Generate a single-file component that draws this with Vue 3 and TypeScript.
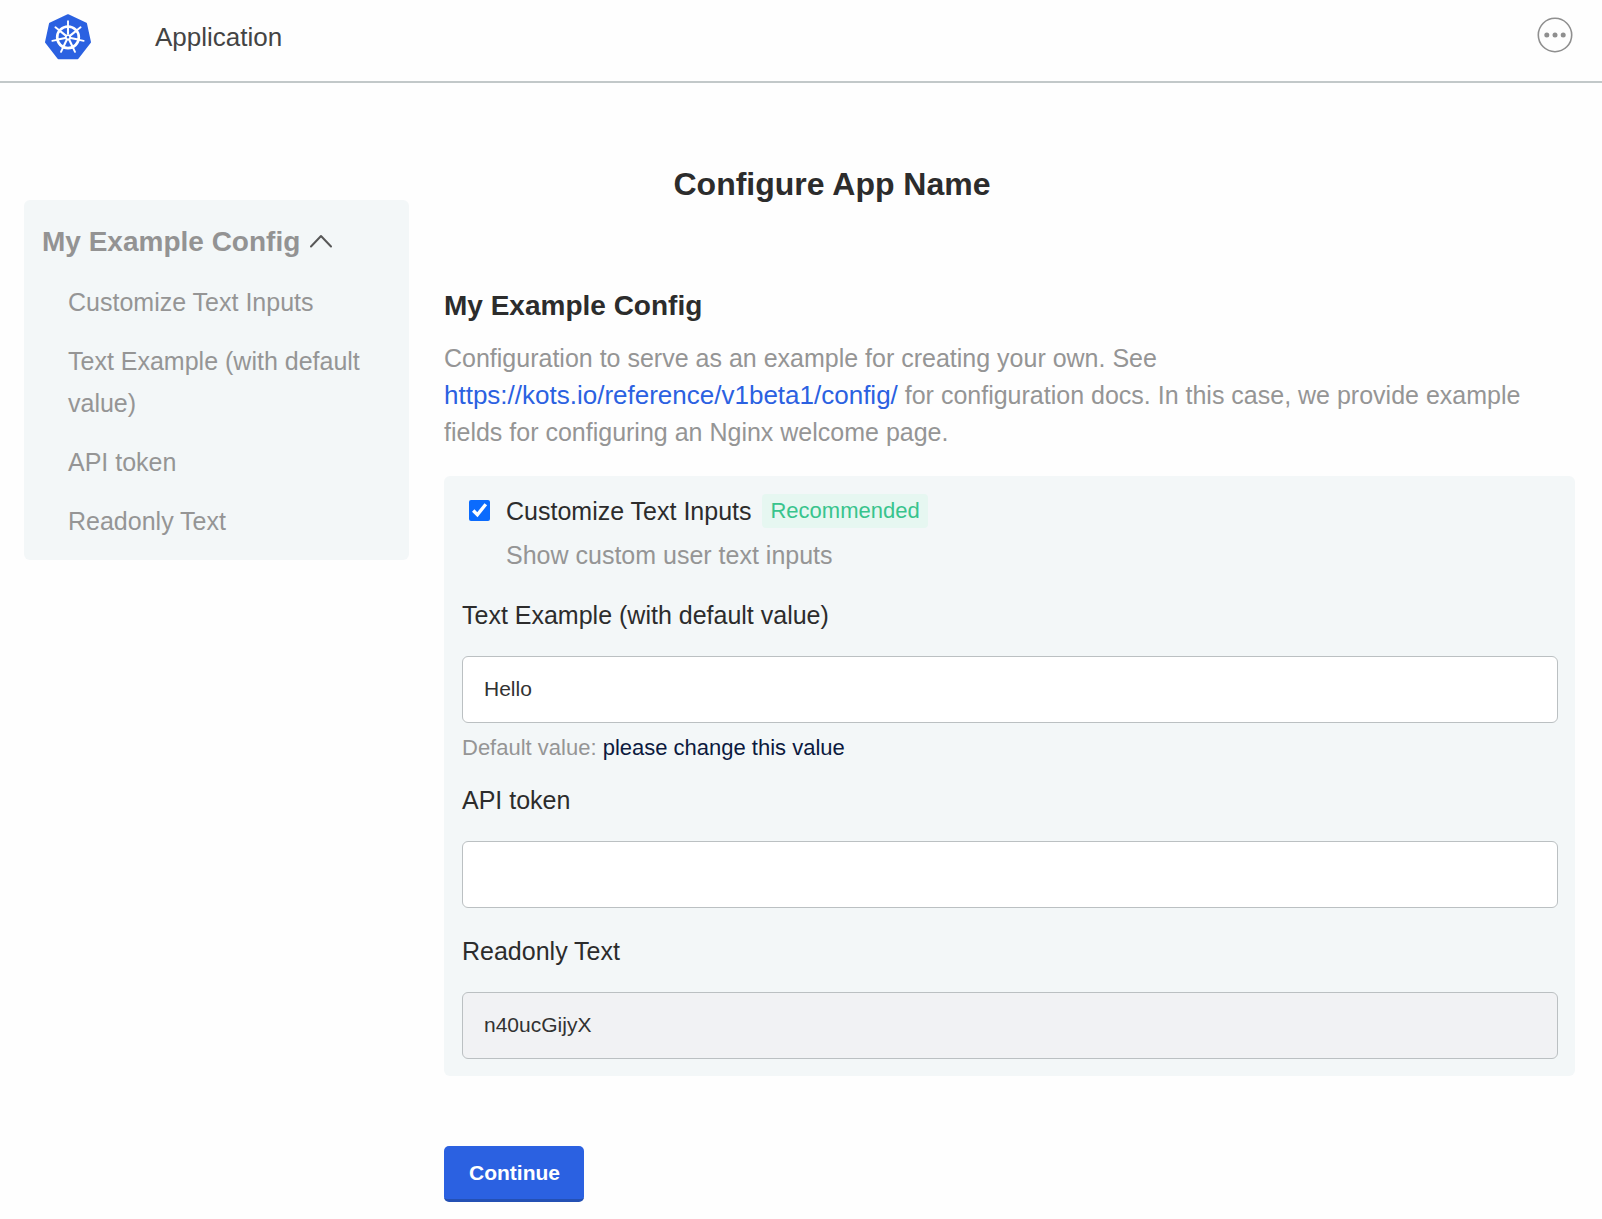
<script setup lang="ts">
import { ref } from 'vue'

interface NavItem {
  id: string
  label: string
}

const navItems: NavItem[] = [
  { id: 'customize', label: 'Customize Text Inputs' },
  { id: 'text-example', label: 'Text Example (with default value)' },
  { id: 'api-token', label: 'API token' },
  { id: 'readonly-text', label: 'Readonly Text' },
]

const expanded = ref(true)
const customize = ref(true)
const textExample = ref('Hello')
const apiToken = ref('')
const readonlyText = 'n40ucGijyX'

// The helm has seven evenly spaced spokes.
const spokes = Array.from({ length: 7 }, (_, i) => (i * 360) / 7)
</script>

<template>
  <div class="page">
    <header class="topbar">
      <a class="logo" href="#" aria-label="Home">
        <svg width="46" height="46" viewBox="0 0 46 46" aria-hidden="true">
          <path
            d="M23 1.2 41 9.6 45 28.2 32.6 44.2H13.4L1 28.2 5 9.6Z"
            fill="#2b61e1"
            stroke="#2b61e1"
            stroke-width="2"
            stroke-linejoin="round"
          />
          <g stroke="#fff" fill="none">
            <circle cx="23" cy="23.3" r="10.8" stroke-width="2.7" />
            <g v-for="a in spokes" :key="a" :transform="`rotate(${a} 23 23.3)`">
              <path d="M23 20.5V13" stroke-width="2.1" />
              <path d="M23 12V7.2" stroke-width="1.9" stroke-linecap="round" />
            </g>
            <circle cx="23" cy="23.3" r="2.2" stroke-width="1.9" />
          </g>
        </svg>
      </a>
      <a class="tab" href="#">Application</a>
      <button class="more" type="button" aria-label="More options">
        <svg width="36" height="36" viewBox="0 0 36 36" aria-hidden="true">
          <circle cx="18" cy="18" r="16.7" fill="none" stroke="#8f8f8f" stroke-width="1.6" />
          <g fill="#8f8f8f">
            <circle cx="9.8" cy="18" r="2.5" />
            <circle cx="18" cy="18" r="2.5" />
            <circle cx="26.2" cy="18" r="2.5" />
          </g>
        </svg>
      </button>
    </header>

    <main class="content">
      <h1>Configure App Name</h1>
      <div class="columns">
        <nav class="sidebar" aria-label="Config sections">
          <button class="group" type="button" :aria-expanded="expanded" @click="expanded = !expanded">
            My Example Config
            <svg width="22" height="16" viewBox="0 0 22 16" aria-hidden="true">
              <path
                d="M1 12.5 11 2 21 12.5"
                fill="none"
                stroke="#585858"
                stroke-width="2"
                stroke-linecap="round"
                stroke-linejoin="round"
              />
            </svg>
          </button>
          <ul v-if="expanded">
            <li v-for="item in navItems" :key="item.id">
              <a :href="`#${item.id}`">{{ item.label }}</a>
            </li>
          </ul>
        </nav>

        <form class="config" @submit.prevent>
          <h2>My Example Config</h2>
          <p class="description">
            Configuration to serve as an example for creating your own. See
            <a href="https://kots.io/reference/v1beta1/config/">https://kots.io/reference/v1beta1/config/</a>
            for configuration docs. In this case, we provide example fields for configuring an Nginx
            welcome page.
          </p>

          <div class="panel">
            <div class="check">
              <input id="customize" v-model="customize" type="checkbox" aria-describedby="customize-help" />
              <div class="check-text">
                <div class="check-title">
                  <label for="customize">Customize Text Inputs</label>
                  <span class="badge">Recommended</span>
                </div>
                <p id="customize-help">Show custom user text inputs</p>
              </div>
            </div>

            <div class="field">
              <label for="text-example">Text Example (with default value)</label>
              <input id="text-example" v-model="textExample" type="text" />
              <p class="default">Default value: <span>please change this value</span></p>
            </div>

            <div class="field">
              <label for="api-token">API token</label>
              <input id="api-token" v-model="apiToken" type="text" />
            </div>

            <div class="field">
              <label for="readonly-text">Readonly Text</label>
              <input id="readonly-text" :value="readonlyText" type="text" readonly />
            </div>
          </div>

          <button class="continue" type="submit">Continue</button>
        </form>
      </div>
    </main>
  </div>
</template>

<style>
body {
  background: #fefefe;
}
</style>

<style scoped>
.page {
  font-family: 'Liberation Sans', Arial, sans-serif;
  font-size: 25px;
  line-height: 34px;
  color: #2c2c2c;
}

h1,
h2,
p,
ul {
  margin: 0;
}

a {
  text-decoration: none;
}

button {
  border: 0;
  font-family: inherit;
  cursor: pointer;
}

.topbar {
  display: flex;
  align-items: center;
  padding: 14px 29px 21px 45px;
  border-bottom: 2px solid #c2c8c9;
}

.logo,
.logo svg,
.more svg {
  display: block;
}

.tab {
  margin-left: 64px;
  font-size: 26px;
  color: #444;
}

.more {
  margin: 0 0 4px auto;
  padding: 0;
  background: none;
}

.content {
  padding: 85px 27px 17px 24px;
}

h1 {
  padding-left: 65px;
  font-size: 32px;
  line-height: 32px;
  text-align: center;
}

.columns {
  display: flex;
  align-items: flex-start;
  gap: 35px;
}

.sidebar {
  flex: 0 0 385px;
  box-sizing: border-box;
  padding: 25px 17px 18px 18px;
  border-radius: 6px;
  background: #f3f7f8;
}

.group {
  display: flex;
  align-items: center;
  gap: 10px;
  padding: 0;
  background: none;
  color: #939393;
  font-size: 28px;
  font-weight: bold;
  line-height: 34px;
}

.sidebar ul {
  display: grid;
  gap: 17px;
  margin-top: 22px;
  padding-left: 26px;
  list-style: none;
  line-height: 42px;
}

.sidebar li a {
  display: block;
  color: #959595;
}

.config {
  flex: 1;
  min-width: 0;
  padding-top: 89px;
}

h2 {
  font-size: 28px;
  line-height: 34px;
}

.description {
  margin: 17px 0 25px;
  line-height: 37px;
  color: #959595;
}

.description a {
  color: #2b61e1;
  font-size: 26px;
}

.panel {
  padding: 18px 17px 17px 18px;
  border-radius: 6px;
  background: #f3f7f8;
}

.check {
  display: flex;
  align-items: flex-start;
  gap: 16px;
  padding-left: 7px;
}

.check input {
  width: 21px;
  height: 21px;
  margin: 6px 0 0;
  accent-color: #0b6bfd;
}

.check-title {
  display: flex;
  align-items: center;
  gap: 11px;
}

.badge {
  padding: 0 8px;
  border-radius: 4px;
  background: #e6f7f1;
  color: #38c48d;
  font-size: 22px;
}

.check p {
  margin-top: 10px;
  color: #959595;
}

.field {
  margin-top: 26px;
}

.field label {
  display: block;
  margin-bottom: 24px;
}

.field input {
  display: block;
  box-sizing: border-box;
  width: 100%;
  height: 67px;
  padding: 0 21px 2px;
  border: 1px solid #bbc0c2;
  border-radius: 6px;
  background: #fff;
  color: #323232;
  font-family: inherit;
  font-size: 21px;
}

.field input[readonly] {
  background: #f1f2f4;
}

.default {
  margin: 8px 0 -8px;
  font-size: 22px;
  color: #959595;
}

.default span {
  color: #0c1a3e;
}

.continue {
  display: block;
  margin-top: 70px;
  padding: 10px 24px 9px 25px;
  border-bottom: 3px solid #2450b4;
  border-radius: 5px;
  background: #2b61e1;
  color: #fff;
  font-size: 21px;
  font-weight: bold;
  line-height: 34px;
}
</style>
